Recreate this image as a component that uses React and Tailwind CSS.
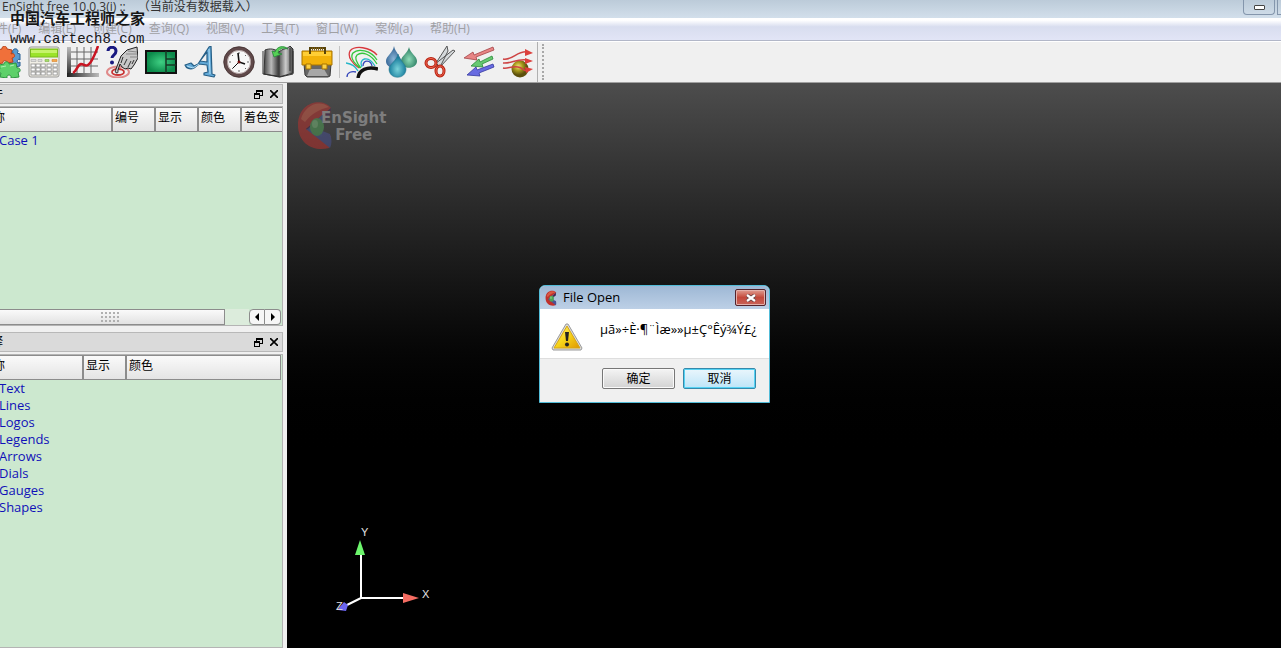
import React from "react";

function Icon({ children }) {
  return (
    <svg viewBox="0 0 32 32" className="size-8 shrink-0" fill="none" aria-hidden="true">
      {children}
    </svg>
  );
}

const Puzzle = () => (
  <Icon>
    <path d="M1 3h9v3c2-2 5-1 5 2s-3 4-5 2v5H1z" fill="#4a8fd0" stroke="#235b91" />
    <path d="M20 8l4-1c-2-4 4-6 5-2 0 1 0 1-1 2l3 1v6c-2-2-4 1-2 3l2-1v4l-5 1-5-2z" fill="#5b9bd0" stroke="#285e91" />
    <path d="M8 4l5-1c-1-3 5-4 5 0l5 1-1 4c4-2 5 4 1 4l1 4-6 1c1-3-5-3-4 0l-6 1z" fill="#f0703a" stroke="#b8421a" />
    <path d="M10 19l5-1c0-3 5-3 5 0l7-1 1 5c4-1 4 5 1 4l1 5-8 1c1-4-5-4-4 0l-7-1 1-4c-5 1-5-4-1-4z" fill="#5ed06a" stroke="#2e9440" />
    <path d="M12 21l5-1M21 20l4-1" stroke="#aef0b2" />
  </Icon>
);

const Calculator = () => (
  <Icon>
    <rect x="1" y="1" width="30" height="30" rx="2" fill="#f1efe6" stroke="#999" />
    <rect x="2.500" y="3" width="27" height="8" fill="#9be32a" stroke="#79b81f" />
    <path d="M3 4h26v3H3z" fill="#c5f36b" />
    <g fill="#fff" stroke="#8b8b8b" strokeWidth=".8">
      {[18, 22, 26].map((y) => [3, 8, 13, 19, 25].map((x) => (
        <rect key={`${x}-${y}`} x={x} y={y} width="4.200" height="3" />
      )))}
    </g>
    <path d="M3 13.500h5v2H3zM10 13.500h4v2h-4z" fill="#ddd" stroke="#aaa" strokeWidth=".6" />
    <path d="M17 13.500h4v2h-4z" fill="#a6dc6a" stroke="#7cae47" strokeWidth=".6" />
    <path d="M24 13.500h5v2h-5z" fill="#f3a94e" stroke="#d9822b" strokeWidth=".6" />
  </Icon>
);

const Graph = () => (
  <Icon>
    <defs>
      <linearGradient id="axis" x2="0" y2="1"><stop stopColor="#bbb" /><stop offset="1" stopColor="#222" /></linearGradient>
      <linearGradient id="base"><stop stopColor="#222" /><stop offset="1" stopColor="#bbb" /></linearGradient>
    </defs>
    <path d="M10 1v27M17 1v27M24 1v27M4 6h27M4 13h27M4 20h27" stroke="#666" />
    <path d="M0 1h4v30H0z" fill="url(#axis)" />
    <path d="M0 27h32v4H0z" fill="url(#base)" />
    <path d="M6 27c4-2 4-8 8-9 3 0 4 3 7 1s4-5 6-9 3-7 4-10" stroke="#c91522" strokeWidth="2.500" />
  </Icon>
);

const Query = () => (
  <Icon>
    <ellipse cx="12" cy="26" rx="11" ry="5.500" stroke="#e08a8a" strokeWidth="2" />
    <ellipse cx="12" cy="26" rx="6" ry="3" stroke="#c93434" strokeWidth="1.800" />
    <path d="M11 27c-2 0-2-2-1-4l5-13 6-6 10-3 1 11-4 7-3 4-3-1-3 1-3-2-2-3-2 6c0 2 0 3-1 3z" fill="#c8c8c8" stroke="#222" />
    <path d="M15 17l2-6M18 19l3-6M22 21l3-6M26 18l2-4" stroke="#333" />
    <path d="M22 5l9 1M20 8l11 0M24 11l7 0" stroke="#888" />
    <path d="M2 5c0-5 8-5 8 0 0 4-4 4-4 7" stroke="#191980" strokeWidth="3" />
    <circle cx="6" cy="16.500" r="2" fill="#191980" />
  </Icon>
);

const Layout = () => (
  <Icon>
    <defs>
      <radialGradient id="green">
        <stop stopColor="#3fd083" /><stop offset="1" stopColor="#0c8a4b" />
      </radialGradient>
    </defs>
    <rect x="1" y="5" width="30" height="22" fill="url(#green)" stroke="#111" strokeWidth="2" />
    <path d="M21 5v22M21 13h10M21 19h10" stroke="#163724" strokeWidth="1.500" />
  </Icon>
);

const Annotation = () => (
  <Icon>
    <path d="M1 19l6-2 3 3 4-2L25 1l2-1 1 28 3 1-1 2-10-2v-2l4-1-1-7-8-1-5 4c-4 2-8 0-9-3zM16 15l7 1V6z" fill="#62a9d7" fillRule="evenodd" stroke="#275f86" strokeWidth="1.200" strokeLinejoin="round" />
    <path d="M3 20l6 2 6-4M25 3l1 25" stroke="#b1dcf3" />
  </Icon>
);

const Clock = () => (
  <Icon>
    <circle cx="16" cy="16" r="13.500" fill="#f8f8f8" stroke="#60494a" strokeWidth="3.500" />
    <circle cx="16" cy="16" r="15.300" stroke="#3c2a2a" strokeWidth=".8" />
    <circle cx="16" cy="16" r="11.500" stroke="#a49190" strokeWidth=".8" />
    <path d="M16 6v2M16 24v2M6 16h2M24 16h2M9 9l1 1M23 9l-1 1M9 23l1-1M23 23l-1-1" stroke="#666" />
    <path d="M15 7l1 9 6 2" stroke="#111" strokeWidth="1.600" />
    <path d="M16 16l-6 6" stroke="#111" />
    <circle cx="16" cy="16" r="1.500" fill="#711" />
  </Icon>
);

const Book = () => (
  <Icon>
    <defs>
      <linearGradient id="page">
        <stop stopColor="#444" /><stop offset=".25" stopColor="#bbb" /><stop offset=".48" stopColor="#444" /><stop offset=".75" stopColor="#ccc" /><stop offset="1" stopColor="#444" />
      </linearGradient>
    </defs>
    <path d="M3 4c5-2 10-1 14 2 4-4 7-2 11-6l3 3v24l-14 4-15-3z" fill="url(#page)" stroke="#333" />
    <path d="M17 7v23M1 5v23l14 2 3 1 13-3V5M28 2v23" stroke="#333" />
    <path d="M10 5l3 1c2-6 9-7 13-3-6-2-9 0-10 4l4 1-8 3z" fill="#55d055" stroke="#28883b" strokeWidth=".8" />
  </Icon>
);

const Toolbox = () => (
  <Icon>
    <path d="M3 18h27l-1 12-2 1H6l-2-2z" fill="#666" stroke="#3c3c3c" />
    <path d="M9 23h14l4 7H6z" fill="#a7a7a7" />
    <path d="M1 5h30v14H1z" fill="#f2b20a" stroke="#a87500" />
    <path d="M2 6h28v4H2z" fill="#ffce35" />
    <path d="M9 8V2h15v6" stroke="#57430a" strokeWidth="2" />
    <path d="M11 3h12" stroke="#806117" strokeWidth="3" strokeDasharray="1 1" />
    <path d="M5 18h5v5H5zM21 18h5v5h-5z" fill="#fad045" stroke="#a87500" />
  </Icon>
);

const Contour = () => (
  <Icon>
    <path d="M13 22C7 18 1 11 4 5 9-1 24 1 31 9" stroke="#d8383d" strokeWidth="1.300" />
    <path d="M14 22C8 17 4 11 7 7c5-5 18-3 24 7M15 22C10 16 8 12 11 9c5-4 14-1 20 9" stroke="#34c63d" strokeWidth="1.300" />
    <path d="M16 21c-4-8 6-13 13-1M0 17c7 1 10 4 12 8" stroke="#24b6c8" strokeWidth="1.300" />
    <path d="M17 20c0-7 8-6 9 0M1 31c0-5 5-6 9-5" stroke="#3446ba" strokeWidth="1.300" />
    <path d="M12 32c1-8 9-12 20-9" stroke="#111" strokeWidth="3.500" />
  </Icon>
);

const Drops = () => (
  <Icon>
    <defs>
      <radialGradient id="water" cy=".65"><stop stopColor="#79d2da" /><stop offset="1" stopColor="#187d9d" /></radialGradient>
      <radialGradient id="mint" cy=".6"><stop stopColor="#8fdcb8" /><stop offset="1" stopColor="#35876b" /></radialGradient>
      <radialGradient id="slate" cy=".6"><stop stopColor="#89b4d6" /><stop offset="1" stopColor="#3a6a99" /></radialGradient>
    </defs>
    <path d="M9 0c1 6 7 10 7 15 0 9-15 9-15 0C1 10 8 7 9 0z" fill="url(#slate)" />
    <path d="M24 1c1 6 8 9 8 14 0 9-16 9-16 0 0-5 7-8 8-14z" fill="url(#mint)" />
    <path d="M13 8c1 6 8 10 8 15 0 11-17 11-17 0 0-5 8-8 9-15z" fill="url(#water)" stroke="#27798e" strokeWidth=".6" />
  </Icon>
);

const Scissors = () => (
  <Icon>
    <path d="M11 18L29 4l2 1-15 16zM12 17L23 0l1 5-8 16z" fill="#d5d9db" stroke="#555" />
    <ellipse cx="7" cy="17" rx="5" ry="4.500" stroke="#b8200f" strokeWidth="3" />
    <ellipse cx="7" cy="17" rx="5" ry="4.500" stroke="#ee6a55" />
    <ellipse cx="16" cy="25" rx="4" ry="5" stroke="#b8200f" strokeWidth="3" />
    <ellipse cx="16" cy="25" rx="4" ry="5" stroke="#ee6a55" />
  </Icon>
);

const Vectors = () => (
  <Icon>
    <path d="M1 12l9-6 1 3L30 1l1 3-18 7 1 3z" fill="#e78585" stroke="#a34345" strokeWidth=".8" />
    <path d="M8 20l8-7 1 3 12-6 1 3-11 5 1 3z" fill="#67c971" stroke="#298a38" strokeWidth=".8" />
    <path d="M4 29l9-8 1 3 16-6 1 3-15 6 1 3z" fill="#686be1" stroke="#3437a0" strokeWidth=".8" />
  </Icon>
);

const Traces = () => (
  <Icon>
    <defs>
      <radialGradient id="ball" cx=".4" cy=".35"><stop stopColor="#f2e47c" /><stop offset=".5" stopColor="#a89a1c" /><stop offset="1" stopColor="#5c4f0c" /></radialGradient>
    </defs>
    <circle cx="18" cy="23" r="8.500" fill="url(#ball)" />
    <path d="M1 13c10 2 14-9 25-7M1 17c9 1 13-5 25-3M1 22c5 1 8-2 15-1 6 1 5 5 10 3" stroke="#ce4444" strokeWidth="1.500" />
    <path d="M23 3l8 4-8 3zM23 12l8 3-8 3zM23 21l8 2-7 4z" fill="#dc3f3b" />
  </Icon>
);

function BrandMark({ className }) {
  return (
    <svg viewBox="0 0 34 50" className={className} aria-hidden="true">
      <path d="M33 8C25-3 0 1 0 25c0 20 17 27 31 23l2-12L8 29z" fill="#c0302c" />
      <path d="M33 8L8 29l4 2 20-14z" fill="#4b2450" />
      <path d="M8 29l24 19c2-4 2-9 0-14l-10-4z" fill="#4a5296" />
      <path d="M10 29l14-14v22z" fill="#465d96" />
      <ellipse cx="19" cy="27" rx="7" ry="9" fill="#4fa357" />
      <ellipse cx="17" cy="24" rx="3" ry="4" fill="#7cc27d" />
      <path d="M3 19C7 6 20-1 31 7 22 9 13 14 7 22z" fill="#d85a44" />
    </svg>
  );
}

const mainTools = [
  ["Parts", Puzzle], ["Calculator", Calculator], ["Plot", Graph], ["Query", Query], ["Viewports", Layout],
  ["Annotations", Annotation], ["Time", Clock], ["Flipbook", Book], ["Tools", Toolbox],
];
const partTools = [
  ["Contours", Contour], ["Isosurfaces", Drops], ["Clips", Scissors], ["Vectors", Vectors], ["Traces", Traces],
];

function ToolButton({ name, Glyph }) {
  return (
    <button aria-label={name} className="flex h-10 w-[39px] shrink-0 items-center justify-center">
      <Glyph />
    </button>
  );
}

function PanelTitle({ title }) {
  return (
    <div className="flex h-5 shrink-0 items-center border border-[#b8b8b8] bg-[#dadada]">
      <h2 className="flex-1 text-xs">{title}</h2>
      <button aria-label={`Float ${title}`} className="flex size-4 items-center justify-center">
        <svg viewBox="0 0 9 9" className="size-[9px]" fill="none" stroke="#000" shapeRendering="crispEdges">
          <path d="M2.500 3V.500h6v5H6M2 1.500h7M.500 3.500h5v5h-5zM0 4.500h6" />
        </svg>
      </button>
      <button aria-label={`Close ${title}`} className="flex size-4 items-center justify-center">
        <svg viewBox="0 0 8 8" className="size-2" stroke="#000" strokeWidth="1.600">
          <path d="M0 0l8 8M8 0L0 8" />
        </svg>
      </button>
    </div>
  );
}

function PanelTable({ columns, rows }) {
  return (
    <table className="w-full table-fixed border-separate border-spacing-0">
      <thead>
        <tr>
          {columns.map(([label, width]) => (
            <th
              key={label}
              className={`${width} h-[25px] overflow-hidden border-t border-r-2 border-b border-[#8c8c8c] bg-linear-to-b from-[#fafafa] to-[#e4e4e4] px-[2px] pb-1 text-left text-xs font-normal whitespace-nowrap last:border-r`}
            >
              {label}
            </th>
          ))}
        </tr>
      </thead>
      <tbody>
        {rows.map((row) => (
          <tr key={row}>
            <td colSpan={columns.length} className="h-[17px] pl-5 text-[13px] leading-[17px] text-[#1010b8]">{row}</td>
          </tr>
        ))}
      </tbody>
    </table>
  );
}

function Triad() {
  return (
    <svg viewBox="0 0 100 90" className="h-[90px] w-[100px]" role="img" aria-label="Axes">
      <path d="M28 24v46h44M28 70l-16 8" stroke="#fff" strokeWidth="2" fill="none" />
      <path d="M27 12l5 15H22z" fill="#6cf56c" />
      <path d="M86 70l-16-5v10z" fill="#f56c62" />
      <path d="M5 81l6-7 4 3-2 6-8-1z" fill="#6b65ef" />
      <g fill="#e4e4e4" fontFamily="Liberation Sans" fontSize="11">
        <text x="28" y="8">Y</text><text x="89" y="70">X</text><text x="3" y="82">Z</text>
      </g>
    </svg>
  );
}

function Dialog() {
  return (
    <section role="dialog" aria-labelledby="dialog-title" className="absolute top-[202px] left-[252px] w-[231px] overflow-hidden rounded-t-md border border-[#52bcd8] bg-[#f0f0f0] text-xs">
      <header className="flex h-[23px] items-center bg-linear-to-b from-[#9eb8d5] to-[#bdd0e6] pr-[3px] pl-1">
        <BrandMark className="h-4 w-[14px]" />
        <h2 id="dialog-title" className="ml-[5px] flex-1 text-[13px]">File Open</h2>
        <button aria-label="Close" className="flex h-[17px] w-[31px] items-center justify-center rounded-xs border border-[#54232b] bg-linear-to-b from-[#df9c91] via-[#c3483b] to-[#c86358] inset-ring inset-ring-[#e3b0aa]">
          <svg viewBox="0 0 12 8" className="h-2 w-3">
            <path d="M2 1l8 6M10 1L2 7" stroke="#684344" strokeWidth="4" /><path d="M2 1l8 6M10 1L2 7" stroke="#fff" strokeWidth="2.200" />
          </svg>
        </button>
      </header>
      <div className="flex h-[50px] border-b border-[#dedede] bg-white pl-[11px]">
        <svg viewBox="0 0 32 28" className="mt-[14px] h-7 w-8 shrink-0">
          <defs><linearGradient id="warn" x2="1" y2="1"><stop stopColor="#fff27a" /><stop offset=".5" stopColor="#f7d51a" /><stop offset="1" stopColor="#df9600" /></linearGradient></defs>
          <path d="M15 1h2l14 24-1 2H2l-1-2z" fill="#ddd" stroke="#999" />
          <path d="M16 3l13 22H3z" fill="url(#warn)" stroke="#d6a514" />
          <path d="M14 9h4l-1 9h-2z" fill="#222" /><circle cx="16" cy="21.500" r="2" fill="#222" />
        </svg>
        <p className="ml-[17px] pt-3 text-[13px] leading-4 whitespace-nowrap">µã»÷È·¶¨Ìæ»»µ±Ç°Êý¾Ý£¿</p>
      </div>
      <div className="flex h-[43px] justify-end gap-2 pt-[9px] pr-[13px]">
        <button className="h-[21px] w-[73px] rounded-xs border border-[#777] bg-linear-to-b from-[#f4f4f4] to-[#d3d3d3] leading-4 inset-ring inset-ring-[#fafafa]">确定</button>
        <button className="h-[21px] w-[73px] rounded-xs border border-[#3689ab] bg-linear-to-b from-[#eaf6fc] to-[#bde5f8] leading-4 inset-ring inset-ring-[#55d3f4]">取消</button>
      </div>
    </section>
  );
}

export default function App() {
  return (
    <div className="relative flex h-screen flex-col overflow-hidden bg-[#f0f0f0] font-['Open_Sans','Noto_Sans_CJK_SC',sans-serif] text-black">
      <header className="flex h-[18px] shrink-0 items-start justify-between bg-linear-to-b from-[#bccbd9] to-[#d2dfeb] pl-[2px]">
        <h1 className="flex gap-3 text-xs leading-[14px] text-[#333]">
          <span>EnSight free 10.0.3(i) ::</span>
          <span>（当前没有数据载入）</span>
        </h1>
        <div className="flex gap-[2px]">
          <button aria-label="Minimize" className="flex h-[15px] w-8 items-center justify-center rounded-b-sm border border-t-0 border-[#8496ac]">
            <span className="h-[5px] w-[11px] rounded-[1px] border border-[#444] bg-white" />
          </button>
          <button aria-label="Maximize" className="h-[15px] w-1 border-b border-l border-[#8496ac]" />
        </div>
      </header>
      <nav className="flex h-[23px] shrink-0 items-center border-b border-[#b2b7c8] bg-linear-to-b from-white from-10% via-[#d8ddef] via-40% to-[#e2e5f6]">
        <div className="-ml-4 flex gap-[17px] text-xs whitespace-nowrap text-[#a0a0a4]">
          {["文件(F)", "编辑(E)", "创建(C)", "查询(Q)", "视图(V)", "工具(T)", "窗口(W)", "案例(a)", "帮助(H)"].map((item) => (
            <button key={item}>{item}</button>
          ))}
        </div>
      </nav>
      <div className="flex h-[42px] shrink-0 items-center border-t border-b border-t-white border-b-[#a0a0a0]">
        <div className="-ml-[15px] flex">
          {mainTools.map(([name, Glyph]) => <ToolButton key={name} name={name} Glyph={Glyph} />)}
        </div>
        <div className="mx-[2px] h-8 w-[2px] border-r border-[#c4c4c4]" />
        <div className="flex border-r border-[#b0b0b0]">
          {partTools.map(([name, Glyph]) => <ToolButton key={name} name={name} Glyph={Glyph} />)}
        </div>
        <div className="ml-1 h-9 border-l-2 border-dotted border-[#a8a8a8]" />
      </div>
      <main className="flex min-h-0 flex-1">
        <aside className="-ml-[22px] flex w-[309px] shrink-0 flex-col pt-px pr-1">
          <PanelTitle title="零件" />
          <section className="mt-[2px] flex h-[220px] shrink-0 flex-col overflow-hidden border border-[#b4b4b4] bg-[#cce8cf] pr-px">
            <PanelTable
              columns={[["名称", "w-[134px]"], ["编号", "w-[43px]"], ["显示", "w-[43px]"], ["颜色", "w-[43px]"], ["着色变", "w-[41px]"]]}
              rows={["Case 1"]}
            />
            <div className="mt-auto flex h-4 shrink-0">
              <div className="flex flex-1 items-center justify-center border border-[#8c8c8c] bg-linear-to-b from-[#fafafa] to-[#e2e2e2] pl-4">
                <div className="h-3 w-5 bg-[radial-gradient(#b0b0b0_1px,transparent_1px)] bg-size-[4px_4px]" />
              </div>
              <div className="w-6 bg-[#dcecdc]" />
              <button aria-label="Scroll left" className="flex w-4 items-center justify-center rounded-l-sm border border-[#8c8c8c] bg-[#f6f6f6]">
                <svg viewBox="0 0 4 8" className="h-2 w-1"><path d="M4 0v8L0 4z" /></svg>
              </button>
              <button aria-label="Scroll right" className="flex w-4 items-center justify-center rounded-r-sm border border-l-0 border-[#8c8c8c] bg-[#f6f6f6]">
                <svg viewBox="0 0 4 8" className="h-2 w-1"><path d="M0 0v8l4-4z" /></svg>
              </button>
            </div>
          </section>
          <div className="mt-[6px] flex min-h-0 flex-1 flex-col">
            <PanelTitle title="注释" />
            <section className="mt-[2px] flex-1 overflow-hidden border border-[#b4b4b4] bg-[#cce8cf] pr-px">
              <PanelTable
                columns={[["名称", "w-[105px]"], ["显示", "w-[43px]"], ["颜色", "w-[154px]"]]}
                rows={["Text", "Lines", "Logos", "Legends", "Arrows", "Dials", "Gauges", "Shapes"]}
              />
            </section>
          </div>
        </aside>
        <div className="relative flex min-w-0 flex-1 flex-col justify-between bg-linear-to-b from-[#4d4d4d] to-black to-67% pt-[17px] pb-[30px]">
          <div className="flex items-center pl-[11px] opacity-50">
            <BrandMark className="h-[50px] w-[34px]" />
            <p className="-ml-[11px] pt-1 text-center font-['DejaVu_Sans'] text-[15px] leading-[17px] font-bold text-[#b8b8b8]">EnSight<br />Free</p>
          </div>
          <div className="pl-[46px]"><Triad /></div>
          <Dialog />
        </div>
      </main>
      <div className="pointer-events-none absolute top-2 left-[10px] whitespace-nowrap text-[#161616]">
        <p className="text-[15px] leading-5 font-bold">中国汽车工程师之家</p>
        <p className="font-['Liberation_Mono'] text-sm leading-[22px]">www.cartech8.com</p>
      </div>
    </div>
  );
}
